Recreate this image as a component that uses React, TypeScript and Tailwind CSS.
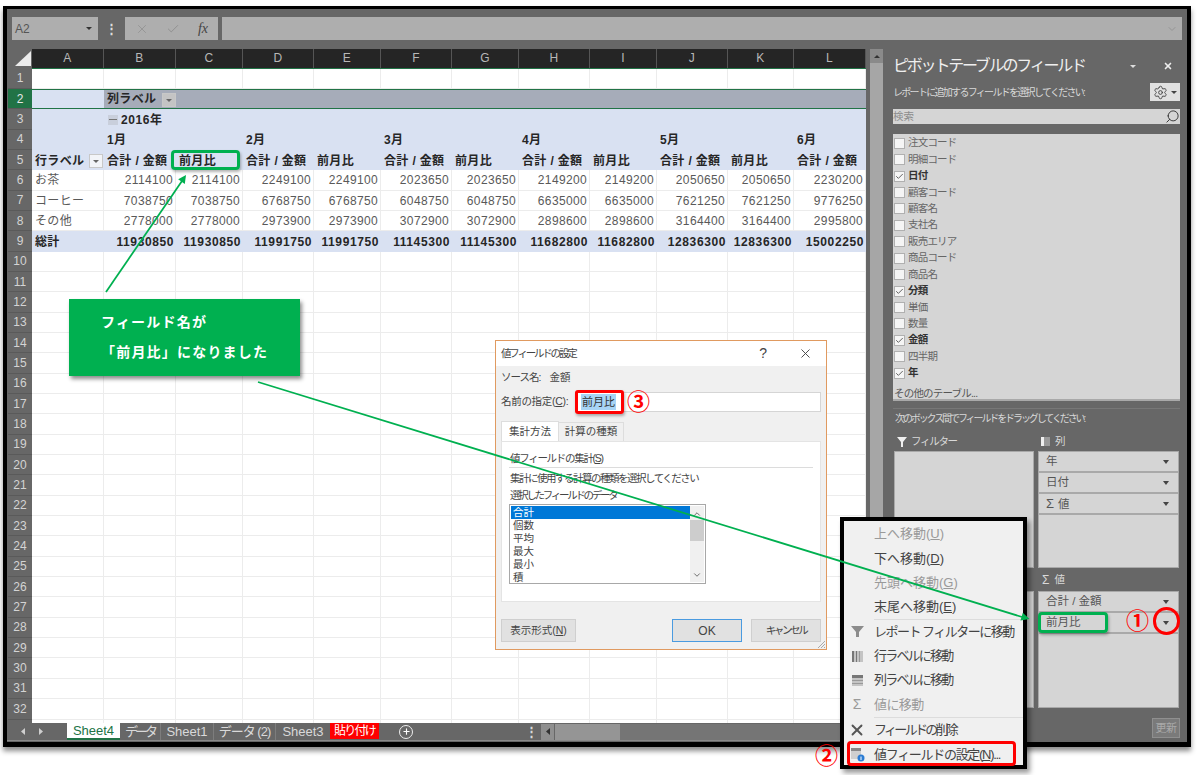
import { Check, ChevronDown, ChevronUp, Plus, Search, Settings, X } from "lucide-react";

const columns = ["A", "B", "C", "D", "E", "F", "G", "H", "I", "J", "K", "L"];
const gridCols = "grid grid-cols-[72px_72px_67px_71px_67px_71px_67px_71px_67px_71px_66px_72px]";

const months = ["1月", "", "2月", "", "3月", "", "4月", "", "5月", "", "6月"];
const dataRows = [
  { label: "お茶", values: [2114100, 2249100, 2023650, 2149200, 2050650, 2230200] },
  { label: "コーヒー", values: [7038750, 6768750, 6048750, 6635000, 7621250, 9776250] },
  { label: "その他", values: [2778000, 2973900, 3072900, 2898600, 3164400, 2995800] },
];
const totals = [11930850, 11991750, 11145300, 11682800, 12836300, 15002250];

const fields = [
  { name: "注文コード" },
  { name: "明細コード" },
  { name: "日付", on: true },
  { name: "顧客コード" },
  { name: "顧客名" },
  { name: "支社名" },
  { name: "販売エリア" },
  { name: "商品コード" },
  { name: "商品名" },
  { name: "分類", on: true },
  { name: "単価" },
  { name: "数量" },
  { name: "金額", on: true },
  { name: "四半期" },
  { name: "年", on: true },
];

const expand = (values: number[]) => values.flatMap((v) => [v, v]).slice(0, 11);

function Cell({ children, className = "" }: { children?: React.ReactNode; className?: string }) {
  return <div className={`flex items-center overflow-visible whitespace-nowrap border-r border-b border-[#ececec] pt-px ${className}`}>{children}</div>;
}

function FilterButton({ className = "" }: { className?: string }) {
  return (
    <span className={`flex h-[14px] w-[14px] items-center justify-center border border-[#c8c8c8] ${className}`}>
      <span className="mt-[1px] border-x-[3px] border-t-[3px] border-x-transparent border-t-[#666]" />
    </span>
  );
}

function Sheet() {
  return (
    <div className="h-[674px] w-[834px] shrink-0 overflow-hidden bg-white text-[12px] tracking-[0.35px] text-[#595959]">
      <div className={`${gridCols} h-[19.5px] border-b border-[#217346] bg-[#252525] text-[#b8b8b8]`}>
        {columns.map((c) => (
          <div key={c} className="flex items-center justify-center border-r border-[#555]">{c}</div>
        ))}
      </div>
      <div className={`${gridCols} auto-rows-[20.35px]`}>
        {/* row 1 */}
        {columns.map((c) => <Cell key={c} />)}
        {/* row 2 */}
        <div className="border-y border-[#217346] bg-[#d9e1f2]" />
        <div className="col-span-11 flex items-center border-y border-[#217346] bg-[#a6acb9] pl-[3px] font-bold text-[#262626]">
          列ラベル
          <FilterButton className="ml-[6px] mt-[2px] bg-[#c4c4c4]" />
        </div>
        {/* row 3 */}
        <div className="col-span-12 flex items-center bg-[#d9e1f2] pl-[76px] pt-px font-bold tracking-[0.6px] text-[#262626]">
          <span className="mr-[3px] flex h-[10px] w-[10px] items-center justify-center bg-[#c9cfdc]">
            <span className="h-px w-[8px] bg-[#777]" />
          </span>
          2016年
        </div>
        {/* row 4 */}
        <div className="bg-[#d9e1f2]" />
        {months.map((m, i) => (
          <div key={i} className="flex items-center bg-[#d9e1f2] pl-[3px] pt-px font-bold text-[#262626]">{m}</div>
        ))}
        {/* row 5 */}
        <div className="flex items-center justify-between bg-[#d9e1f2] pl-[3px] pr-[1px] pt-px font-bold text-[#262626]">
          行ラベル
          <FilterButton className="bg-[#f2f4f8]" />
        </div>
        {months.map((_, i) => (
          <div key={i} className="flex items-center whitespace-nowrap bg-[#d9e1f2] pl-[3px] pt-px font-bold text-[#262626]">
            {i % 2 === 0 ? "合計 / 金額" : "前月比"}
          </div>
        ))}
        {/* rows 6-8 */}
        {dataRows.map((row) => [
          <Cell key={row.label} className="pl-[3px]">{row.label}</Cell>,
          ...expand(row.values).map((v, i) => (
            <Cell key={row.label + i} className="justify-end pr-[2px]">{v}</Cell>
          )),
        ])}
        {/* row 9 */}
        <div className="flex items-center bg-[#d9e1f2] pl-[3px] pt-px font-bold text-[#262626]">総計</div>
        {expand(totals).map((v, i) => (
          <div key={i} className="flex items-center justify-end bg-[#d9e1f2] pr-[2px] pt-px font-bold tracking-[0.6px] text-[#262626]">{v}</div>
        ))}
        {/* empty rows */}
        {Array.from({ length: 24 * 12 }).map((_, i) => <Cell key={i} />)}
      </div>
    </div>
  );
}

function RowHeader() {
  return (
    <div className="h-[674px] w-[24px] shrink-0 overflow-hidden bg-[#676767] text-[12px] text-[#d4d4d4]">
      <div className="h-[19.5px]">
        <svg width="24" height="20" viewBox="0 0 24 20">
          <polygon points="23,2 23,17 7,17" fill="#ececec" />
        </svg>
      </div>
      {Array.from({ length: 32 }).map((_, i) => (
        <div
          key={i}
          className={`flex h-[20.35px] items-center justify-center border-b border-[#5a5a5a] ${i === 1 ? "bg-[#217346] text-[#e6e6e6]" : ""}`}
        >
          {i + 1}
        </div>
      ))}
    </div>
  );
}

function SheetTabs() {
  const sep = "flex items-center justify-center whitespace-nowrap border-r border-[#7d7d7d]";
  return (
    <div className="flex h-[18px] items-stretch border-b border-[#8a8a8a] text-[13px] text-[#d9d9d9]">
      <div className="flex w-[60px] items-center gap-[14px] pl-[14px]">
        <svg width="4" height="7" viewBox="0 0 4 7"><polygon points="4,0 4,7 0,3.5" fill="#cfcfcf" /></svg>
        <svg width="4" height="7" viewBox="0 0 4 7"><polygon points="0,0 0,7 4,3.5" fill="#cfcfcf" /></svg>
      </div>
      <div className="flex w-[53px] items-center justify-center border-b-2 border-[#217346] bg-white text-[#217346]">Sheet4</div>
      <div className={`${sep} w-[41px] tracking-[-3px]`}>データ</div>
      <div className={`${sep} w-[53px]`}>Sheet1</div>
      <div className={`${sep} w-[62px] tracking-[-1px]`}>データ (2)</div>
      <div className="flex w-[54px] items-center justify-center">Sheet3</div>
      <div className="mb-[1px] flex w-[49px] items-center justify-center whitespace-nowrap bg-[#ff0000] text-[12px] tracking-[-1.8px] text-white">貼り付け</div>
      <div className="ml-[20px] flex w-[14px] items-center">
        <span className="flex h-[14px] w-[14px] items-center justify-center rounded-full border border-[#eee] text-white">
          <Plus size={9} strokeWidth={3} />
        </span>
      </div>
      <div className="ml-[113px] flex w-[10px] items-center justify-center font-bold leading-none">⋮</div>
      <div className="ml-[5px] flex flex-1 items-center">
        <div className="flex h-[16px] w-[13px] items-center justify-center bg-[#8f8f8f]">
          <svg width="4" height="7" viewBox="0 0 4 7"><polygon points="4,0 4,7 0,3.5" fill="#333" /></svg>
        </div>
        <div className="ml-[1px] h-[16px] w-[65px] bg-[#959595]" />
        <div className="h-[16px] flex-1 bg-[#757575]" />
      </div>
    </div>
  );
}

function PaneRow({ label, sigma }: { label: string; sigma?: boolean }) {
  return (
    <div className="flex h-[21px] items-center justify-between border-b-2 border-[#a9a9a9] pl-[7px] pr-[9px] text-[11.5px] text-[#555]">
      <span>{sigma && <span className="mr-[4px] text-[13px]">Σ</span>}{label}</span>
      <span className="border-x-[3.5px] border-t-[4px] border-x-transparent border-t-[#444]" />
    </div>
  );
}

function FieldPane() {
  return (
    <div className="flex w-[304px] shrink-0 flex-col whitespace-nowrap pl-[10px] pr-[7px] text-[#d9d9d9]">
      <div className="flex h-[34px] items-center justify-between">
        <span className="text-[16px] tracking-[-2.2px] text-[#efefef]">ピボットテーブルのフィールド</span>
        <span className="flex items-center gap-[27px] pr-[7px]">
          <span className="border-x-[3px] border-t-[3px] border-x-transparent border-t-[#ddd]" />
          <X size={10} strokeWidth={4} className="text-[#eee]" />
        </span>
      </div>
      <div className="flex h-[18px] items-center justify-between text-[10px] tracking-[-1.7px]">
        <span>レポートに追加するフィールドを選択してください:</span>
        <span className="flex h-[18px] w-[30px] items-center justify-center gap-[3px] bg-[#e0e0e0] text-[#444]">
          <Settings size={15} strokeWidth={1.5} />
          <span className="border-x-[3px] border-t-[3px] border-x-transparent border-t-[#444]" />
        </span>
      </div>
      <div className="mt-[8px] flex h-[15px] items-center justify-between bg-[#d5d5d5] text-[10.5px] text-[#8c8c8c]">
        <span>検索</span>
        <Search size={15} strokeWidth={1.5} className="-scale-x-100 text-[#333]" />
      </div>
      <div className="mt-[10px] flex h-[267px] flex-col border-b-2 border-[#a9a9a9] bg-[#d5d5d5] pt-[1px] text-[10.5px] tracking-[-0.8px] text-[#666]">
        {fields.map((f) => (
          <div key={f.name} className="flex h-[16.43px] shrink-0 items-center gap-[3px] pl-[1px]">
            <span className="flex h-[11px] w-[11px] items-center justify-center border border-[#b0b0b0] bg-[#f5f5f5]">
              {f.on && <Check size={9} strokeWidth={2} className="text-[#333]" />}
            </span>
            <span className={f.on ? "font-bold text-[#333]" : ""}>{f.name}</span>
          </div>
        ))}
        <div className="mt-[5px] pl-[1px] text-[#555]">その他のテーブル...</div>
      </div>
      <div className="mt-[7px] h-px bg-[#777]" />
      <div className="mt-[1px] flex h-[16px] items-center pl-[2px] text-[10px] tracking-[-2.1px]">次のボックス間でフィールドをドラッグしてください:</div>
      <div className="mt-[6px] grid h-[19px] grid-cols-[145px_1fr] items-center text-[10.5px]">
        <span className="flex items-center gap-[4px] pl-[4px] tracking-[-1.3px]">
          <svg width="10" height="10" viewBox="0 0 10 10"><polygon points="0,0 10,0 6,5 6,10 4,10 4,5" fill="#efefef" /></svg>
          フィルター
        </span>
        <span className="flex items-center gap-[5px] pl-[3px]">
          <svg width="9" height="9" viewBox="0 0 9 9"><rect width="9" height="9" fill="#9a9a9a" /><rect width="3" height="9" fill="#efefef" /></svg>
          列
        </span>
      </div>
      <div className="grid h-[117px] grid-cols-[140px_141px] gap-[4px] pl-[1px]">
        <div className="border border-[#a9a9a9] bg-[#d5d5d5]" />
        <div className="border border-[#a9a9a9] bg-[#d5d5d5]">
          <PaneRow label="年" />
          <PaneRow label="日付" />
          <PaneRow label="値" sigma />
        </div>
      </div>
      <div className="grid h-[23px] grid-cols-[145px_1fr] items-center text-[10.5px]">
        <span />
        <span className="flex items-center gap-[5px] pl-[4px]"><span className="text-[12px]">Σ</span> 値</span>
      </div>
      <div className="grid h-[117px] grid-cols-[140px_141px] gap-[4px] pl-[1px]">
        <div className="border border-[#a9a9a9] bg-[#d5d5d5]" />
        <div className="border border-[#a9a9a9] bg-[#d5d5d5]">
          <PaneRow label="合計 / 金額" />
          <PaneRow label="前月比" />
        </div>
      </div>
      <div className="mt-[10px] flex justify-end">
        <span className="flex h-[20px] w-[28px] items-center justify-center border border-[#8f8f8f] bg-[#7a7a7a] text-[11px] tracking-[-0.5px] text-[#a9a9a9]">更新</span>
      </div>
    </div>
  );
}

function ContextMenu() {
  const item = "flex h-[24.2px] items-center whitespace-nowrap";
  const iconBox = "flex w-[26px] justify-center";
  return (
    <div className="absolute left-[840px] top-[517px] h-[252px] w-[187px] border-[4px] border-black bg-[#f0f0f0] pt-[1px] text-[13px] text-[#444] shadow-[3px_4px_5px_rgba(0,0,0,0.4)]">
      <div className={`${item} pl-[30px] text-[#9a9a9a]`}>上へ移動(<u>U</u>)</div>
      <div className={`${item} pl-[30px]`}>下へ移動(<u>D</u>)</div>
      <div className={`${item} pl-[30px] text-[#9a9a9a]`}>先頭へ移動(<u>G</u>)</div>
      <div className={`${item} pl-[30px]`}>末尾へ移動(<u>E</u>)</div>
      <div className="ml-[30px] h-px bg-[#dcdcdc]" />
      <div className={item}>
        <span className={iconBox}>
          <svg width="13" height="13" viewBox="0 0 13 13"><polygon points="0,1 13,1 8,7 8,12 5,12 5,7" fill="#8c8c8c" /></svg>
        </span>
        <span className="pl-[4px] tracking-[-1.5px]">レポート フィルターに移動</span>
      </div>
      <div className={item}>
        <span className={iconBox}>
          <svg width="11" height="11" viewBox="0 0 11 11"><rect width="11" height="11" fill="#c4c4c4" /><rect width="2" height="11" fill="#777" /><rect x="4" width="1" height="11" fill="#777" /><rect x="7" width="1" height="11" fill="#999" /></svg>
        </span>
        <span className="pl-[4px] tracking-[-1.8px]">行ラベルに移動</span>
      </div>
      <div className={item}>
        <span className={iconBox}>
          <svg width="11" height="11" viewBox="0 0 11 11"><rect width="11" height="11" fill="#c4c4c4" /><rect width="11" height="3" fill="#777" /><rect y="5" width="11" height="1" fill="#999" /><rect y="8" width="11" height="1" fill="#999" /></svg>
        </span>
        <span className="pl-[4px] tracking-[-1.8px]">列ラベルに移動</span>
      </div>
      <div className={`${item} text-[#9a9a9a]`}>
        <span className={`${iconBox} text-[14px]`}>Σ</span>
        <span className="pl-[4px] tracking-[-0.6px]">値に移動</span>
      </div>
      <div className="ml-[30px] h-px bg-[#dcdcdc]" />
      <div className={item}>
        <span className={iconBox}><X size={18} strokeWidth={2.5} className="text-[#555]" /></span>
        <span className="pl-[4px] tracking-[-2.7px]">フィールドの削除</span>
      </div>
      <div className={`${item} mt-[1px]`}>
        <span className={iconBox}>
          <svg width="15" height="15" viewBox="0 0 15 15">
            <rect x="1" y="1" width="10" height="11" fill="#cfcfcf" />
            <rect x="1" y="1" width="10" height="3" fill="#888" />
            <circle cx="11" cy="11" r="3.5" fill="#2b7cd3" />
            <rect x="10.5" y="9.5" width="1" height="3.5" fill="#fff" />
          </svg>
        </span>
        <span className="pl-[4px] tracking-[-1.3px]">値フィールドの設定(<u>N</u>)...</span>
      </div>
    </div>
  );
}

function ValueDialog() {
  return (
    <div className="absolute left-[495px] top-[340px] flex h-[310px] w-[332px] flex-col whitespace-nowrap border border-[#e09a60] bg-[#f0f0f0] text-[10.5px] text-[#444]">
      <div className="flex h-[25px] items-center justify-between bg-white pl-[5px] pr-[13px]">
        <span className="tracking-[-2.2px]">値フィールドの設定</span>
        <span className="flex items-center gap-[31px]">
          <span className="text-[14px]">?</span>
          <X size={15} strokeWidth={1.5} />
        </span>
      </div>
      <div className="mt-[2px] flex h-[20px] items-center pl-[5px]">
        <span className="tracking-[-1px]">ソース名:</span>
        <span className="ml-[9px]">金額</span>
      </div>
      <div className="mt-[3px] flex h-[22px] items-center pl-[5px] pr-[5px]">
        <span className="w-[74px] shrink-0 tracking-[-0.3px]">名前の指定(<u>C</u>):</span>
        <div className="flex h-[20px] flex-1 items-center border border-[#d5d5d5] bg-white pl-[5px]">
          <span className="bg-[#a8d4f5] px-[1px] text-[11px] text-[#333]">前月比</span>
        </div>
      </div>
      <div className="mt-[8px] flex h-[20px] pl-[5px]">
        <div className="flex w-[58px] items-center justify-center border-x border-t border-[#ddd] bg-white">集計方法</div>
        <div className="mt-[1px] flex w-[65px] items-center justify-center border-r border-t border-[#ddd]">計算の種類</div>
      </div>
      <div className="mx-[5px] h-[161px] border border-[#e4e4e4] bg-white px-[7px] pt-[9px]">
        <div className="h-[17px] border-b border-[#dcdcdc] pl-px tracking-[-1.3px]">値フィールドの集計(<u>S</u>)</div>
        <div className="mt-[2px] flex h-[17px] items-center pl-px tracking-[-1.5px]">集計に使用する計算の種類を選択してください</div>
        <div className="flex h-[17px] items-center pl-px tracking-[-2.3px]">選択したフィールドのデータ</div>
        <div className="flex h-[80px] w-[197px] border border-[#a8a8a8] p-px leading-[13px]">
          <div className="flex-1">
            <div className="bg-[#0078d7] pl-[2px] text-white">合計</div>
            {["個数", "平均", "最大", "最小", "積"].map((t) => (
              <div key={t} className="pl-[2px]">{t}</div>
            ))}
          </div>
          <div className="flex w-[14px] flex-col items-center bg-[#f0f0f0] text-[#555]">
            <ChevronUp size={10} className="mt-[3px]" />
            <div className="mt-[1px] h-[21px] w-full bg-[#cdcdcd]" />
            <ChevronDown size={10} className="mt-auto mb-[2px]" />
          </div>
        </div>
      </div>
      <div className="mt-[17px] flex pl-[5px] pr-[5px]">
        <div className="flex h-[23px] w-[75px] items-center justify-center border border-[#cfcfcf] bg-[#e1e1e1]">表示形式(<u>N</u>)</div>
        <div className="ml-auto flex h-[23px] w-[70px] items-center justify-center border border-[#4a9be0] bg-[#e1e1e1] text-[12px]">OK</div>
        <div className="ml-[9px] flex h-[23px] w-[70px] items-center justify-center border border-[#cfcfcf] bg-[#e1e1e1] tracking-[-2.4px]">キャンセル</div>
      </div>
      <svg className="absolute bottom-0 right-0" width="9" height="9" viewBox="0 0 9 9">
        <path d="M8 1 L1 8 M8 4 L4 8 M8 7 L7 8" stroke="#aaa" strokeWidth="1" />
      </svg>
    </div>
  );
}

export default function App() {
  return (
    <div className="relative h-[775px] w-[1200px] overflow-hidden bg-white font-['Liberation_Sans','Noto_Sans_CJK_JP',sans-serif]">
      <div className="ml-[3px] mt-[6px] h-[741px] w-[1188px] border-x-[4px] border-t-[3px] border-b-[5px] border-black bg-[#676767] shadow-[0_4px_5px_rgba(0,0,0,0.45)]">
        {/* formula bar */}
        <div className="flex h-[40px] items-end pl-[5px] pr-[5px] pb-[9px]">
          <div className="flex h-[23px] w-[86px] items-center justify-between bg-[#aeaeae] pl-[3px] pr-[6px] text-[12px] text-[#555]">
            A2
            <span className="border-x-[3px] border-t-[3px] border-x-transparent border-t-[#333]" />
          </div>
          <div className="flex h-[23px] w-[27px] items-center justify-center text-[13px] font-bold text-[#ddd]">⋮</div>
          <div className="flex h-[23px] w-[93px] items-center justify-between bg-[#aeaeae] px-[10px] text-[#8c8c8c]">
            <X size={14} strokeWidth={1.25} />
            <Check size={14} strokeWidth={1.5} />
            <span className="font-['Liberation_Serif',serif] text-[14px] italic text-[#444]">fx</span>
          </div>
          <div className="ml-[4px] flex h-[23px] flex-1 items-center justify-end bg-[#aeaeae] pr-[4px] text-[#8c8c8c]">
            <ChevronDown size={12} strokeWidth={1.5} />
          </div>
        </div>
        <div className="flex">
          <div className="w-[876px] shrink-0">
            <div className="flex pl-[1px]">
              <RowHeader />
              <Sheet />
              <div className="ml-[4px] flex h-[674px] w-[13px] shrink-0 flex-col bg-[#a6a6a6]">
                <div className="flex h-[14px] items-center justify-center bg-[#8a8a8a]">
                  <span className="border-x-[3px] border-b-[3px] border-x-transparent border-b-[#333]" />
                </div>
              </div>
            </div>
            <SheetTabs />
          </div>
          <FieldPane />
        </div>
      </div>

      <ValueDialog />
      <ContextMenu />

      {/* callout and highlight boxes */}
      <div className="absolute left-[69px] top-[299px] flex h-[77px] w-[231px] flex-col justify-center gap-[9px] whitespace-nowrap bg-[#00b050] pl-[32px] text-[14px] font-bold tracking-[1.2px] text-white shadow-[2px_3px_4px_rgba(0,0,0,0.45)]">
        <span>フィールド名が</span>
        <span>「前月比」になりました</span>
      </div>
      <div className="absolute left-[171px] top-[150px] h-[20px] w-[69px] rounded-[4px] border-[3px] border-[#00b050] shadow-[1px_2px_3px_rgba(0,0,0,0.3)]" />
      <div className="absolute left-[1038px] top-[612px] h-[21px] w-[70px] rounded-[4px] border-[3px] border-[#00b050] shadow-[1px_2px_3px_rgba(0,0,0,0.3)]" />
      <div className="absolute left-[575px] top-[390px] h-[24px] w-[49px] rounded-[3px] border-[3px] border-[#ff0000] shadow-[1px_2px_3px_rgba(0,0,0,0.3)]" />
      <div className="absolute left-[847px] top-[741px] h-[25px] w-[169px] rounded-[4px] border-[3px] border-[#ff0000]" />
      <div className="absolute left-[1153px] top-[607px] h-[28px] w-[27px] rounded-full border-[3px] border-[#ff0000]" />
      <span className="absolute left-[1126px] top-[606px] text-[23px] font-bold leading-[30px] text-[#ff0000]">①</span>
      <span className="absolute left-[815px] top-[741px] text-[23px] font-bold leading-[30px] text-[#ff0000]">②</span>
      <span className="absolute left-[627px] top-[387px] text-[23px] font-bold leading-[30px] text-[#ff0000]">③</span>

      <svg className="pointer-events-none absolute left-0 top-0" width="1200" height="775" viewBox="0 0 1200 775">
        <line x1="106" y1="292" x2="182" y2="181" stroke="#00b050" strokeWidth="1.75" />
        <polygon points="186,175 184.8,183.9 178.2,179.3" fill="#00b050" />
        <line x1="258" y1="382" x2="1022" y2="617" stroke="#00b050" strokeWidth="1.75" />
        <polygon points="1029.5,619 1020.4,620.4 1022.8,612.8" fill="#00b050" />
      </svg>
    </div>
  );
}
